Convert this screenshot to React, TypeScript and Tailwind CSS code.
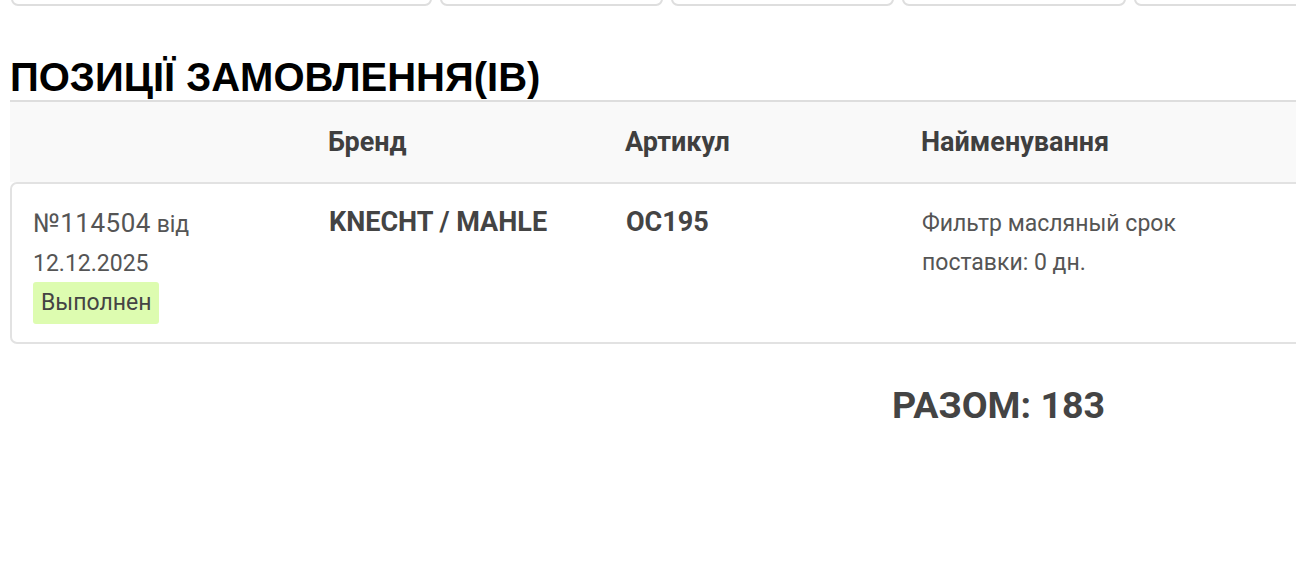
import React from 'react';

const columns = ['', 'Бренд', 'Артикул', 'Найменування', ''];

export default function App() {
  return (
    <div className="w-[1296px] h-[570px] overflow-hidden bg-white pl-[10px]" style={{ fontFamily: 'Roboto, "Liberation Sans", sans-serif' }}>
      {/* filter tabs, cut off at the top */}
      <div className="flex items-end gap-[8px] h-[6px] overflow-hidden pl-[1px]">
        <div className="w-[421px] h-[50px] shrink-0 rounded-[7px] border-2 border-[#dedede] bg-white" />
        <div className="w-[223px] h-[50px] shrink-0 rounded-[7px] border-2 border-[#dedede] bg-white" />
        <div className="w-[223px] h-[50px] shrink-0 rounded-[7px] border-2 border-[#dedede] bg-white" />
        <div className="w-[224px] h-[50px] shrink-0 rounded-[7px] border-2 border-[#dedede] bg-white" />
        <div className="w-[224px] h-[50px] shrink-0 rounded-[7px] border-2 border-[#dedede] bg-white" />
      </div>

      <h2
        className="mt-[48px] text-[40px] leading-[46px] font-bold text-black"
        style={{ fontFamily: '"Liberation Sans", Arial, sans-serif' }}
      >
        ПОЗИЦІЇ ЗАМОВЛЕННЯ(ІВ)
      </h2>

      <div className="w-[1500px]">
        <div className="grid grid-cols-[296px_297px_296px_296px_1fr] h-[82px] items-center bg-[#f9f9f9] border-t-2 border-[#dedede] text-[27px] font-bold text-[#3f3f3f]">
          {columns.map((c, i) => (
            <div key={i} className="pl-[22px]">{c}</div>
          ))}
        </div>

        <div className="grid grid-cols-[296px_297px_296px_296px_1fr] h-[162px] rounded-[7px] border-2 border-[#e2e2e2] bg-white pt-[20px]">
          <div className="pl-[21px] text-[23px] leading-[39px] text-[#555]">
            <div>
              <span className="text-[26px] tracking-[0.5px]">№114504</span> від
            </div>
            <div>12.12.2025</div>
            <span className="inline-block -mt-[2px] rounded-[3px] bg-[#ddfcb0] px-[8px] text-[#444] leading-[42px]">Выполнен</span>
          </div>
          <div className="pl-[21px] text-[27px] leading-[36px] font-bold text-[#444]">KNECHT / MAHLE</div>
          <div className="pl-[21px] text-[27px] leading-[36px] font-bold text-[#444]">OC195</div>
          <div className="pl-[21px] text-[23px] leading-[39px] text-[#555]">
            Фильтр масляный срок<br />поставки: 0 дн.
          </div>
          <div />
        </div>
      </div>

      <div className="mt-[39px] ml-[882px] text-[37.6px] leading-[44px] font-bold text-[#444]">РАЗОМ: 183</div>
    </div>
  );
}
